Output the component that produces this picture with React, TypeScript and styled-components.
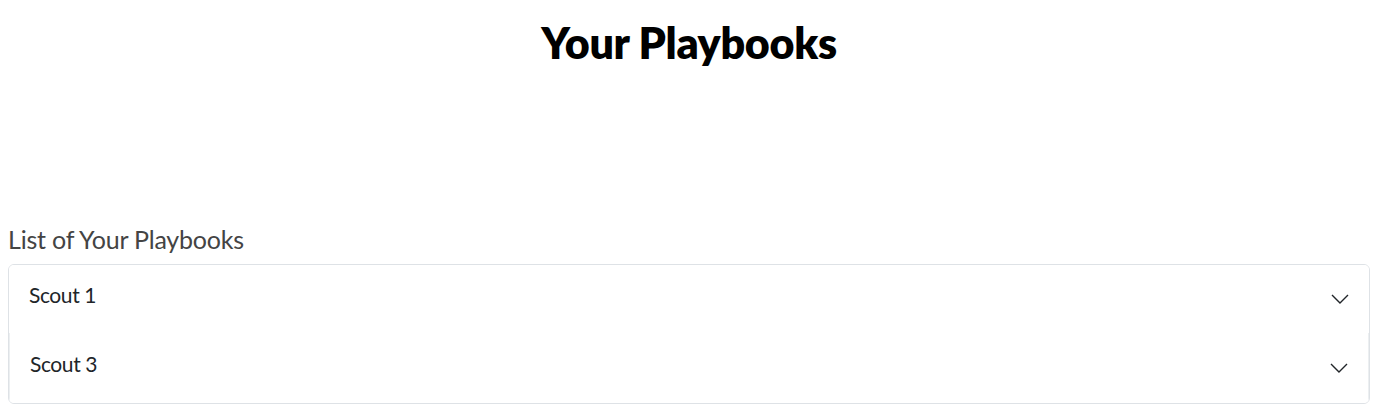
import styled, { createGlobalStyle } from 'styled-components';

const GlobalStyle = createGlobalStyle`
    body {
        margin: 8px 6px 8px 8px;
        background: #ffffff;
        font-family: Lato, 'Noto Sans', sans-serif;
        color: #212529;
    }
`;

const Page = styled.div`
    display: flex;
    flex-direction: column;
`;

const Title = styled.h1`
    margin: 9px 0 0;
    text-align: center;
    font-size: 43px;
    font-weight: 800;
    line-height: 1.2;
    color: #000;
    letter-spacing: -0.3px;
`;

const Section = styled.section`
    margin-top: 155px;
`;

const ListLabel = styled.h2`
    margin: 0 0 10px;
    font-size: 25px;
    font-weight: 400;
    line-height: 1.2;
    color: #444;
    letter-spacing: -0.2px;
`;

const Accordion = styled.div`
    display: flex;
    flex-direction: column;
    border: 1px solid #dee2e6;
    border-radius: 6px;
    overflow: hidden;
`;

interface ItemProps {
    inset?: boolean;
}

const Item = styled.button<ItemProps>`
    display: flex;
    align-items: center;
    justify-content: space-between;
    height: ${({ inset }) => (inset ? '70px' : '68px')};
    padding: 0 ${({ inset }) => (inset ? '21px' : '20px')} 0
        ${({ inset }) => (inset ? '21px' : '20px')};
    border: none;
    background: #fff;
    font-family: inherit;
    font-size: 21px;
    color: #212529;
    letter-spacing: -0.4px;
    cursor: pointer;
    text-align: left;
    ${({ inset }) => inset && 'box-shadow: inset 1px 0 0 #eceff1, inset -1px 0 0 #eceff1;'}
`;

const Name = styled.span`
    margin-bottom: 8px;
`;

const Chevron = () => (
    <svg width="18" height="10" viewBox="0 0 18 10" fill="none">
        <path d="M1 1l8 8 8-8" stroke="#212529" strokeWidth="1.4" />
    </svg>
);

const PLAYBOOKS = ['Scout 1', 'Scout 3'];

export default function App() {
    return (
        <Page>
            <GlobalStyle />
            <Title>Your Playbooks</Title>
            <Section>
                <ListLabel>List of Your Playbooks</ListLabel>
                <Accordion>
                    {PLAYBOOKS.map((name, i) => (
                        <Item key={name} inset={i > 0}>
                            <Name>{name}</Name>
                            <Chevron />
                        </Item>
                    ))}
                </Accordion>
            </Section>
        </Page>
    );
}
